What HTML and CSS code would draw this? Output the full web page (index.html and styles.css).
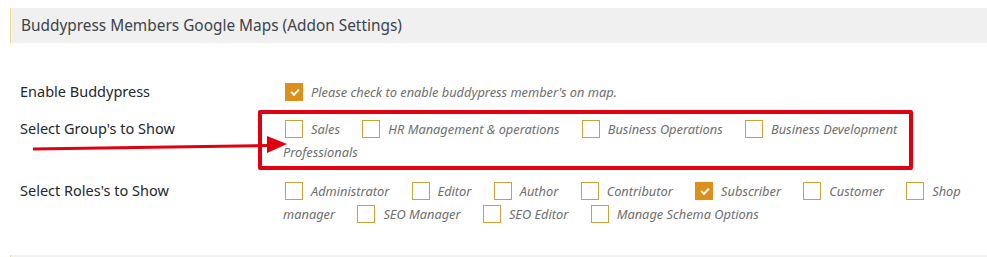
FILE: index.html
```html
<!DOCTYPE html>
<html>
<head>
<meta charset="utf-8">
<link rel="stylesheet" href="styles.css">
</head>
<body>
<div class="wrap">
  <div class="header">Buddypress Members Google Maps (Addon Settings)</div>
  <div class="table">
    <div class="row row-enable">
      <div class="label">Enable Buddypress</div>
      <div class="field"><span class="cb checked"></span><span class="txt">Please check to enable buddypress member's on map.</span></div>
    </div>
    <div class="row row-groups">
      <div class="label">Select Group's to Show</div>
      <div class="field"><span class="cb"></span><span class="txt">Sales</span> <span class="cb"></span><span class="txt">HR Management &amp; operations</span> <span class="cb"></span><span class="txt">Business Operations</span> <span class="cb"></span><span class="txt">Business Development Professionals</span></div>
    </div>
    <div class="row row-roles">
      <div class="label">Select Roles's to Show</div>
      <div class="field"><span class="cb"></span><span class="txt">Administrator</span> <span class="cb"></span><span class="txt">Editor</span> <span class="cb"></span><span class="txt">Author</span> <span class="cb"></span><span class="txt">Contributor</span> <span class="cb checked"></span><span class="txt">Subscriber</span> <span class="cb"></span><span class="txt">Customer</span> <span class="cb"></span><span class="txt">Shop manager</span> <span class="cb"></span><span class="txt">SEO Manager</span> <span class="cb"></span><span class="txt">SEO Editor</span> <span class="cb"></span><span class="txt">Manage Schema Options</span></div>
    </div>
  </div>
  <div class="footer-bar"></div>
</div>
<div class="highlight"></div>
<svg class="arrow" width="260" height="30" viewBox="0 0 260 30">
  <polygon points="2,17.5 2,20.5 238,17 238,14" fill="#e0000f"/>
  <polygon points="236,6 256,14 236,23" fill="#e0000f"/>
</svg>
</body>
</html>
```
FILE: styles.css
```css
html, body {
  margin: 0;
  padding: 0;
  background: #ffffff;
}
body {
  font-family: "Noto Sans", "Open Sans", sans-serif;
  color: #23282d;
  width: 987px;
  height: 257px;
  overflow: hidden;
  position: relative;
}
.wrap {
  padding-top: 8px;
  padding-left: 10px;
}
.header {
  height: 35px;
  line-height: 35px;
  background: #f0f0f0;
  border-left: 1px solid #eadb8f;
  padding-left: 10px;
  font-size: 15.4px;
  color: #3c434a;
}
.table {
  padding-top: 38px;
}
.row {
  display: flex;
}
.row-groups {
  margin-top: 14px;
}
.row-roles {
  margin-top: 16px;
}
.label {
  width: 273px;
  flex: none;
  padding-left: 10px;
  box-sizing: border-box;
  font-size: 14.5px;
  line-height: 20px;
  color: #23282d;
}
.field {
  width: 684px;
  font-size: 12.8px;
  line-height: 23px;
  font-style: italic;
  color: #6e6e6e;
}
.cb {
  display: inline-block;
  width: 16px;
  height: 16px;
  border: 1px solid #c9a23c;
  vertical-align: -4px;
  margin-left: 2px;
  margin-right: 8px;
  box-sizing: content-box;
  position: relative;
}
.txt {
  margin-right: 17px;
}
.cb.checked {
  background: #dd8f1b;
  border-color: #dd8f1b;
}
.cb.checked::after {
  content: "";
  position: absolute;
  left: 5px;
  top: 5px;
  width: 6px;
  height: 3px;
  border-left: 2px solid #ffffff;
  border-bottom: 2px solid #ffffff;
  transform: rotate(-45deg);
}
.footer-bar {
  margin-top: 29px;
  height: 10px;
  background: #f1f1f1;
  border-left: 1px solid #eadb8f;
}
.highlight {
  position: absolute;
  left: 258px;
  top: 110px;
  width: 647px;
  height: 52px;
  border: 4px solid #e0000f;
  border-radius: 2px;
}
.arrow {
  position: absolute;
  left: 31px;
  top: 130px;
}
```
